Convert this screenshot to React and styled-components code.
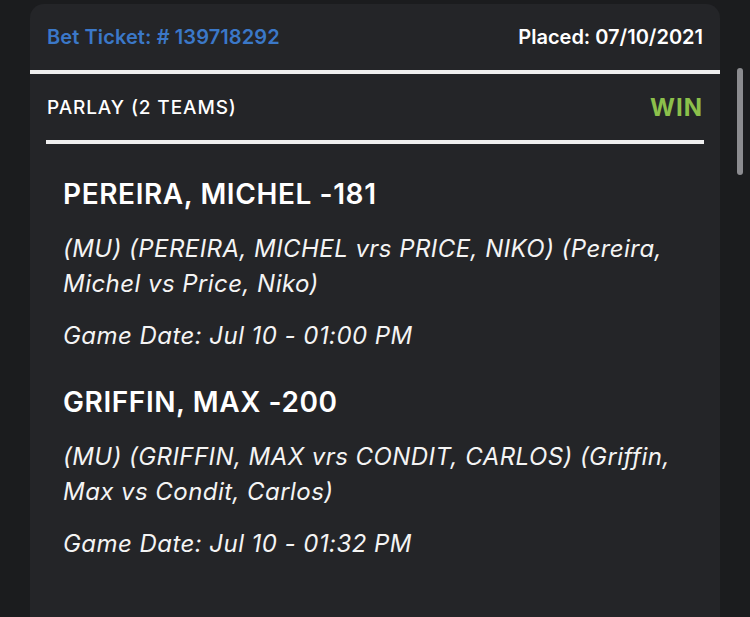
import styled, { createGlobalStyle } from 'styled-components'

const GlobalStyle = createGlobalStyle`
  html, body {
    margin: 0;
    padding: 0;
    background: #1b1c1e;
    overflow: hidden;
  }
  body {
    font-family: Inter, "Open Sans", "Liberation Sans", sans-serif;
    color: #ffffff;
  }
`

const Page = styled.div`
  height: 617px;
  padding: 4px 0 0 30px;
  box-sizing: border-box;
  position: relative;
`

const Ticket = styled.div`
  width: 690px;
  height: 613px;
  background: #242528;
  border-radius: 14px 14px 0 0;
`

const Row = styled.div`
  display: flex;
  justify-content: space-between;
  align-items: center;
  height: 66px;
  padding: 0 17px;
`

const TicketNo = styled.span`
  color: #3b78c8;
  font-size: 20px;
  font-weight: 600;
  letter-spacing: 0.1px;
`

const Placed = styled.span`
  color: #ffffff;
  font-size: 20px;
  font-weight: 600;
`

const Rule = styled.div`
  height: 4px;
  background: #efefef;
  margin: 0 ${p => (p.$inset ? '16px' : '0')};
`

const BetType = styled.span`
  font-size: 19px;
  font-weight: 500;
  letter-spacing: 0.9px;
`

const Result = styled.span`
  color: #8cc04b;
  font-size: 24px;
  font-weight: 700;
  letter-spacing: 1px;
`

const Selections = styled.div`
  padding: 34px 33px 0;
  display: flex;
  flex-direction: column;
  gap: 33px;
`

const Selection = styled.div`
  display: flex;
  flex-direction: column;
`

const Pick = styled.div`
  font-size: 28px;
  font-weight: 600;
  line-height: 32px;
  letter-spacing: 0.6px;
  margin-bottom: 21px;
`

const Detail = styled.div`
  font-size: 24px;
  font-style: italic;
  line-height: 35px;
  letter-spacing: 0.45px;
  color: #f4f4f4;
  margin-bottom: ${p => p.$gap || 0}px;
`

const ScrollThumb = styled.div`
  position: absolute;
  left: 737px;
  top: 68px;
  width: 6px;
  height: 107px;
  border-radius: 3px;
  background: #8c8c90;
`

const legs = [
  {
    pick: 'PEREIRA, MICHEL -181',
    desc: '(MU) (PEREIRA, MICHEL vrs PRICE, NIKO) (Pereira, Michel vs Price, Niko)',
    date: 'Game Date: Jul 10 - 01:00 PM',
  },
  {
    pick: 'GRIFFIN, MAX -200',
    desc: '(MU) (GRIFFIN, MAX vrs CONDIT, CARLOS) (Griffin, Max vs Condit, Carlos)',
    date: 'Game Date: Jul 10 - 01:32 PM',
  },
]

export default function App() {
  return (
    <Page>
      <GlobalStyle />
      <Ticket>
        <Row>
          <TicketNo>Bet Ticket: # 139718292</TicketNo>
          <Placed>Placed: 07/10/2021</Placed>
        </Row>
        <Rule />
        <Row>
          <BetType>PARLAY (2 TEAMS)</BetType>
          <Result>WIN</Result>
        </Row>
        <Rule $inset />
        <Selections>
          {legs.map(leg => (
            <Selection key={leg.pick}>
              <Pick>{leg.pick}</Pick>
              <Detail $gap={17}>{leg.desc}</Detail>
              <Detail>{leg.date}</Detail>
            </Selection>
          ))}
        </Selections>
      </Ticket>
      <ScrollThumb />
    </Page>
  )
}
